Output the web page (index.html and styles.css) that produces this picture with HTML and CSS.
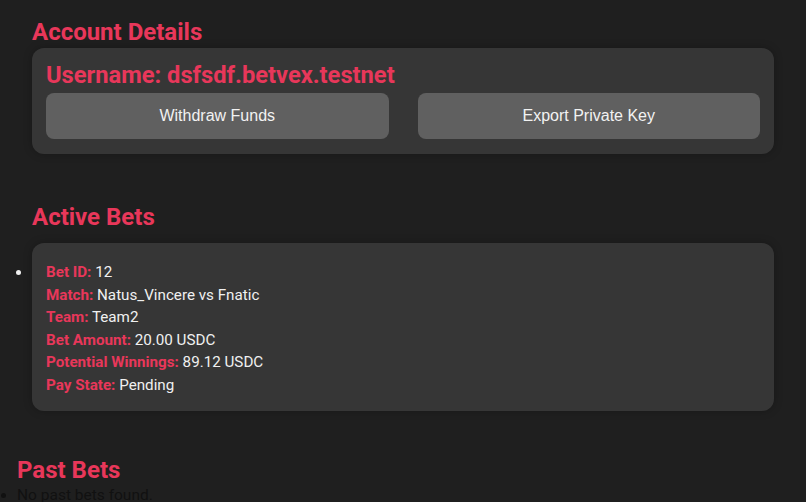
FILE: index.html
```html
<!DOCTYPE html>
<html>
<head>
    <meta charset="UTF-8" />
    <title>Account</title>
    <link rel="stylesheet" href="styles.css">
</head>
<body>
    <div class="section">
        <h2>Account Details</h2>
        <div class="card account-card">
            <h3 class="username">Username: dsfsdf.betvex.testnet</h3>
            <div class="actions">
                <button class="btn">Withdraw Funds</button>
                <button class="btn">Export Private Key</button>
            </div>
        </div>
    </div>

    <div class="section active-bets">
        <h2>Active Bets</h2>
        <ul class="bet-list">
            <li class="card bet-card">
                <div><span class="label">Bet ID:</span> 12</div>
                <div><span class="label">Match:</span> Natus_Vincere vs Fnatic</div>
                <div><span class="label">Team:</span> Team2</div>
                <div><span class="label">Bet Amount:</span> 20.00 USDC</div>
                <div><span class="label">Potential Winnings:</span> 89.12 USDC</div>
                <div><span class="label">Pay State:</span> Pending</div>
            </li>
        </ul>
    </div>

    <h2 class="past-title">Past Bets</h2>
    <ul class="past-list">
        <li>No past bets found.</li>
    </ul>
</body>
</html>
```

FILE: styles.css
```css
body {
    margin: 0;
    padding: 0 17px;
    background-color: #1f1f1f;
    font-family: Roboto, "Noto Sans", sans-serif;
    color: #eeeeee;
}

h2 {
    color: #e8375a;
    font-size: 24px;
    line-height: 30px;
    font-weight: 700;
    margin: 17px 0 1px;
}

.section {
    padding: 0 15px;
}

.card {
    background-color: #363636;
    border-radius: 12px;
    box-shadow: 0 0 8px rgba(0, 0, 0, 0.25);
}

.account-card {
    padding: 10px 14px 15px;
}

.username {
    color: #e8375a;
    font-size: 23.7px;
    line-height: 35px;
    font-weight: 700;
    margin: 0;
}

.actions {
    display: flex;
    gap: 29px;
}

.btn {
    flex: 1;
    height: 46px;
    background-color: #606060;
    border: none;
    border-radius: 8px;
    color: #f2f2f2;
    font-family: "Liberation Sans", Arial, sans-serif;
    font-size: 16px;
    cursor: pointer;
}

.active-bets {
    margin-top: 48px;
}

.active-bets h2 {
    margin-bottom: 11px;
}

.bet-list {
    margin: 0;
    padding: 0;
}

.bet-card {
    padding: 18px 14px 14px;
    font-size: 15.2px;
    line-height: 22.6px;
    color: #f0f0f0;
}

.label {
    color: #e8375a;
    font-weight: 700;
}

.past-title {
    margin-top: 44px;
    margin-bottom: 0;
}

.past-list {
    margin: 0;
    padding: 0;
    font-size: 15.5px;
    line-height: 20px;
    color: #111111;
}
```
